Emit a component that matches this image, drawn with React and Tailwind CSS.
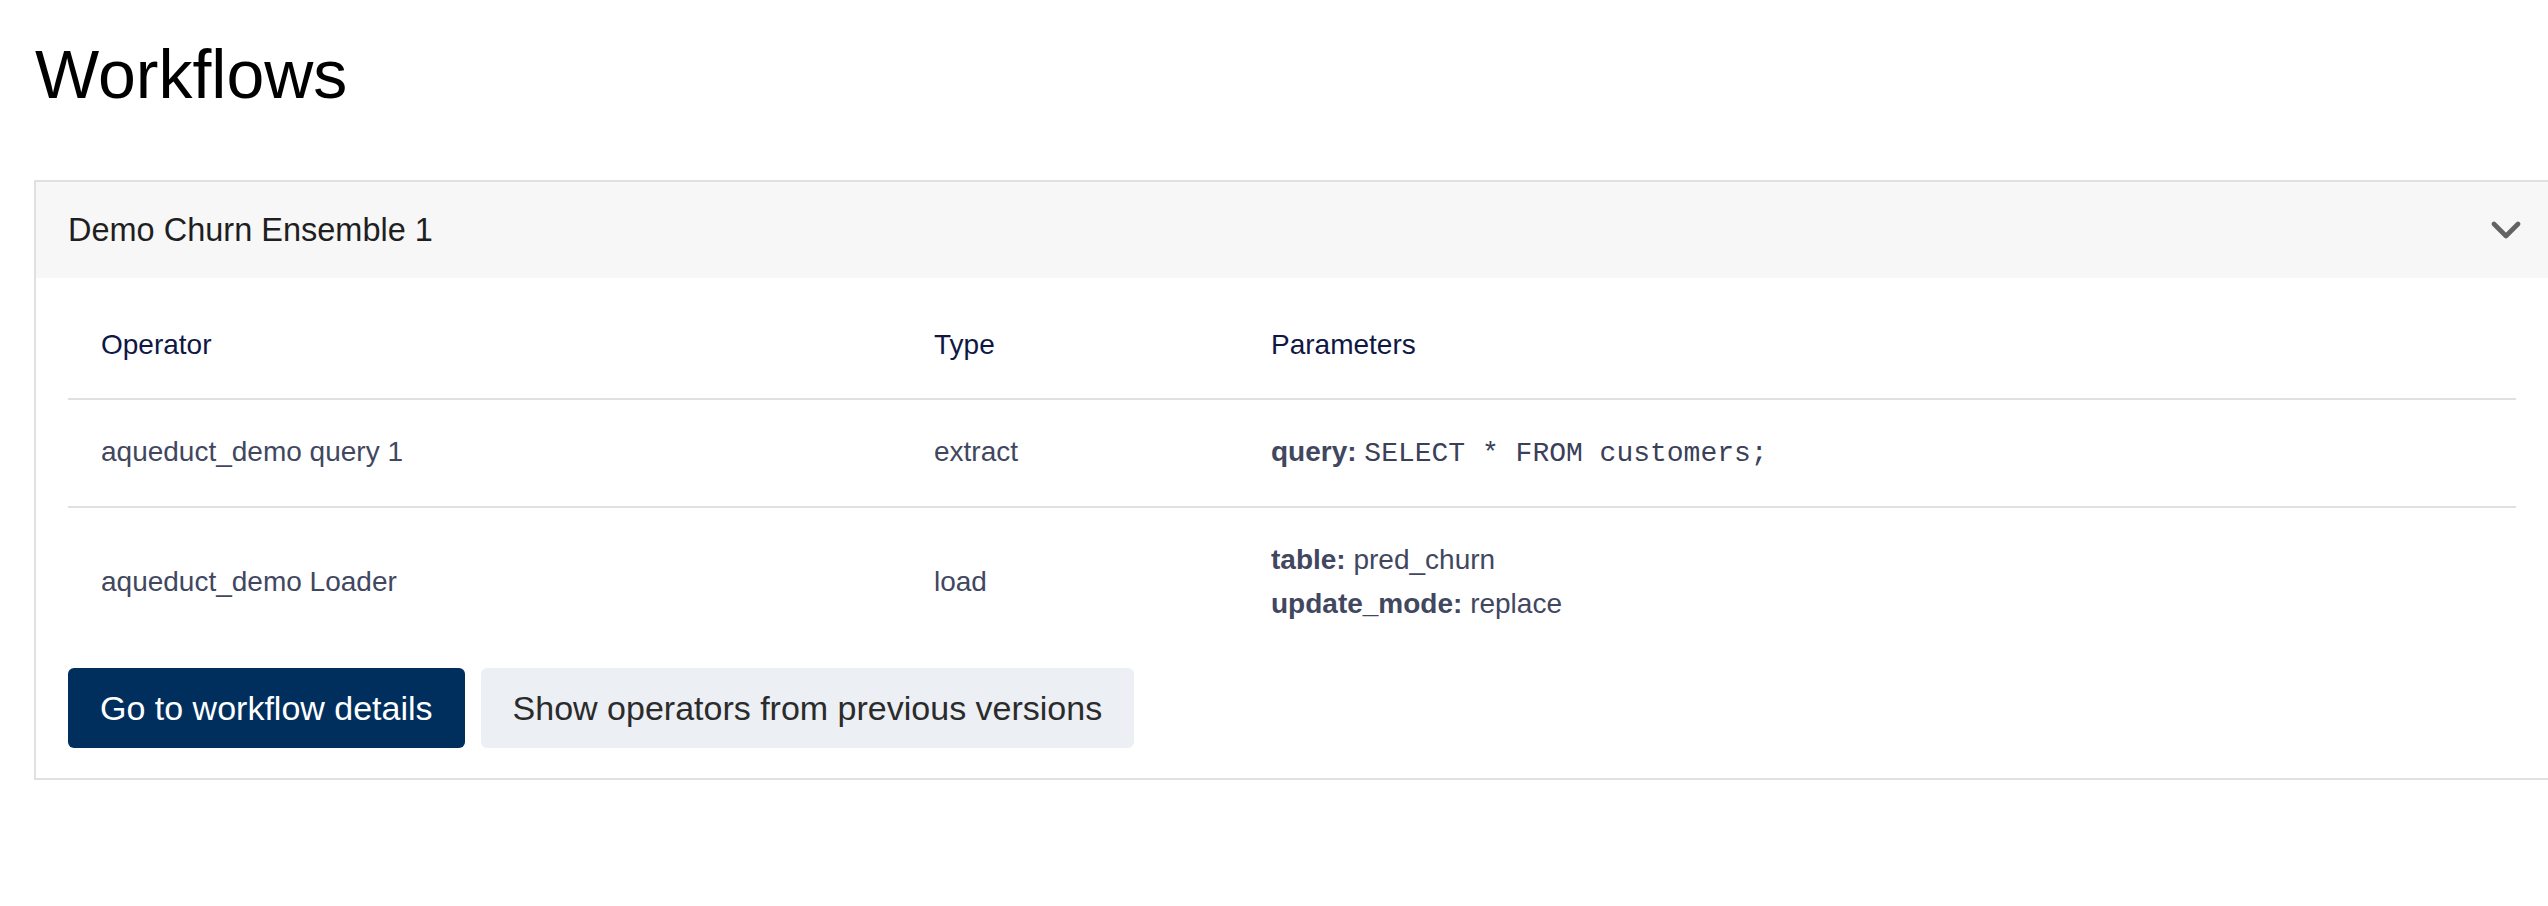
import React from "react";

function Chevron() {
  return (
    <svg width="30" height="19" viewBox="0 0 30 19" fill="none">
      <polyline points="3,3 15,15 27,3" stroke="#636363" strokeWidth="4.6" strokeLinecap="round" strokeLinejoin="round" />
    </svg>
  );
}

const cell = "px-[33px] py-[31px] leading-[44px] text-[28px]";
const bodyCell = "px-[33px] py-[30px] leading-[44px] text-[28px]";

export default function App() {
  return (
    <div className="w-[2548px] h-[906px] overflow-hidden bg-white font-['Liberation_Sans',Arial,sans-serif]">
      <h1 className="ml-[35px] pt-[40px] text-[68px] leading-none font-normal text-black">Workflows</h1>
      <div className="mt-[72px] ml-[34px] w-[2516px] border-2 border-[#e0e0e0]">
        <div className="h-[96px] bg-[#f7f7f7] flex items-center justify-between pl-[32px] pr-[27px]">
          <span className="text-[32.5px] text-[#1f1f1f]">Demo Churn Ensemble 1</span>
          <Chevron />
        </div>
        <div className="px-[32px] pt-[14px] pb-[30px]">
          <div className="grid grid-cols-[833px_337px_1fr] border-b-2 border-[#e0e0e0] text-[#0f1744]">
            <div className={cell}>Operator</div>
            <div className={cell}>Type</div>
            <div className={cell}>Parameters</div>
          </div>
          <div className="grid grid-cols-[833px_337px_1fr] border-b-2 border-[#e0e0e0] text-[#41475f]">
            <div className={bodyCell}>aqueduct_demo query 1</div>
            <div className={bodyCell}>extract</div>
            <div className={bodyCell}>
              <span className="font-bold">query:</span>{" "}
              <span className="font-['Liberation_Mono','Courier_New',monospace] text-[#3a4058]">SELECT * FROM customers;</span>
            </div>
          </div>
          <div className="grid grid-cols-[833px_337px_1fr] text-[#41475f]">
            <div className={bodyCell + " flex items-center"}>aqueduct_demo Loader</div>
            <div className={bodyCell + " flex items-center"}>load</div>
            <div className={bodyCell}>
              <div><span className="font-bold">table:</span> pred_churn</div>
              <div><span className="font-bold">update_mode:</span> replace</div>
            </div>
          </div>
          <div className="mt-[12px] flex gap-[16px]">
            <button className="h-[80px] px-[32px] rounded-[6px] bg-[#002f5d] text-white text-[34px]">Go to workflow details</button>
            <button className="h-[80px] px-[32px] rounded-[6px] bg-[#eceff3] text-[#2b2b2b] text-[34px]">Show operators from previous versions</button>
          </div>
        </div>
      </div>
    </div>
  );
}
